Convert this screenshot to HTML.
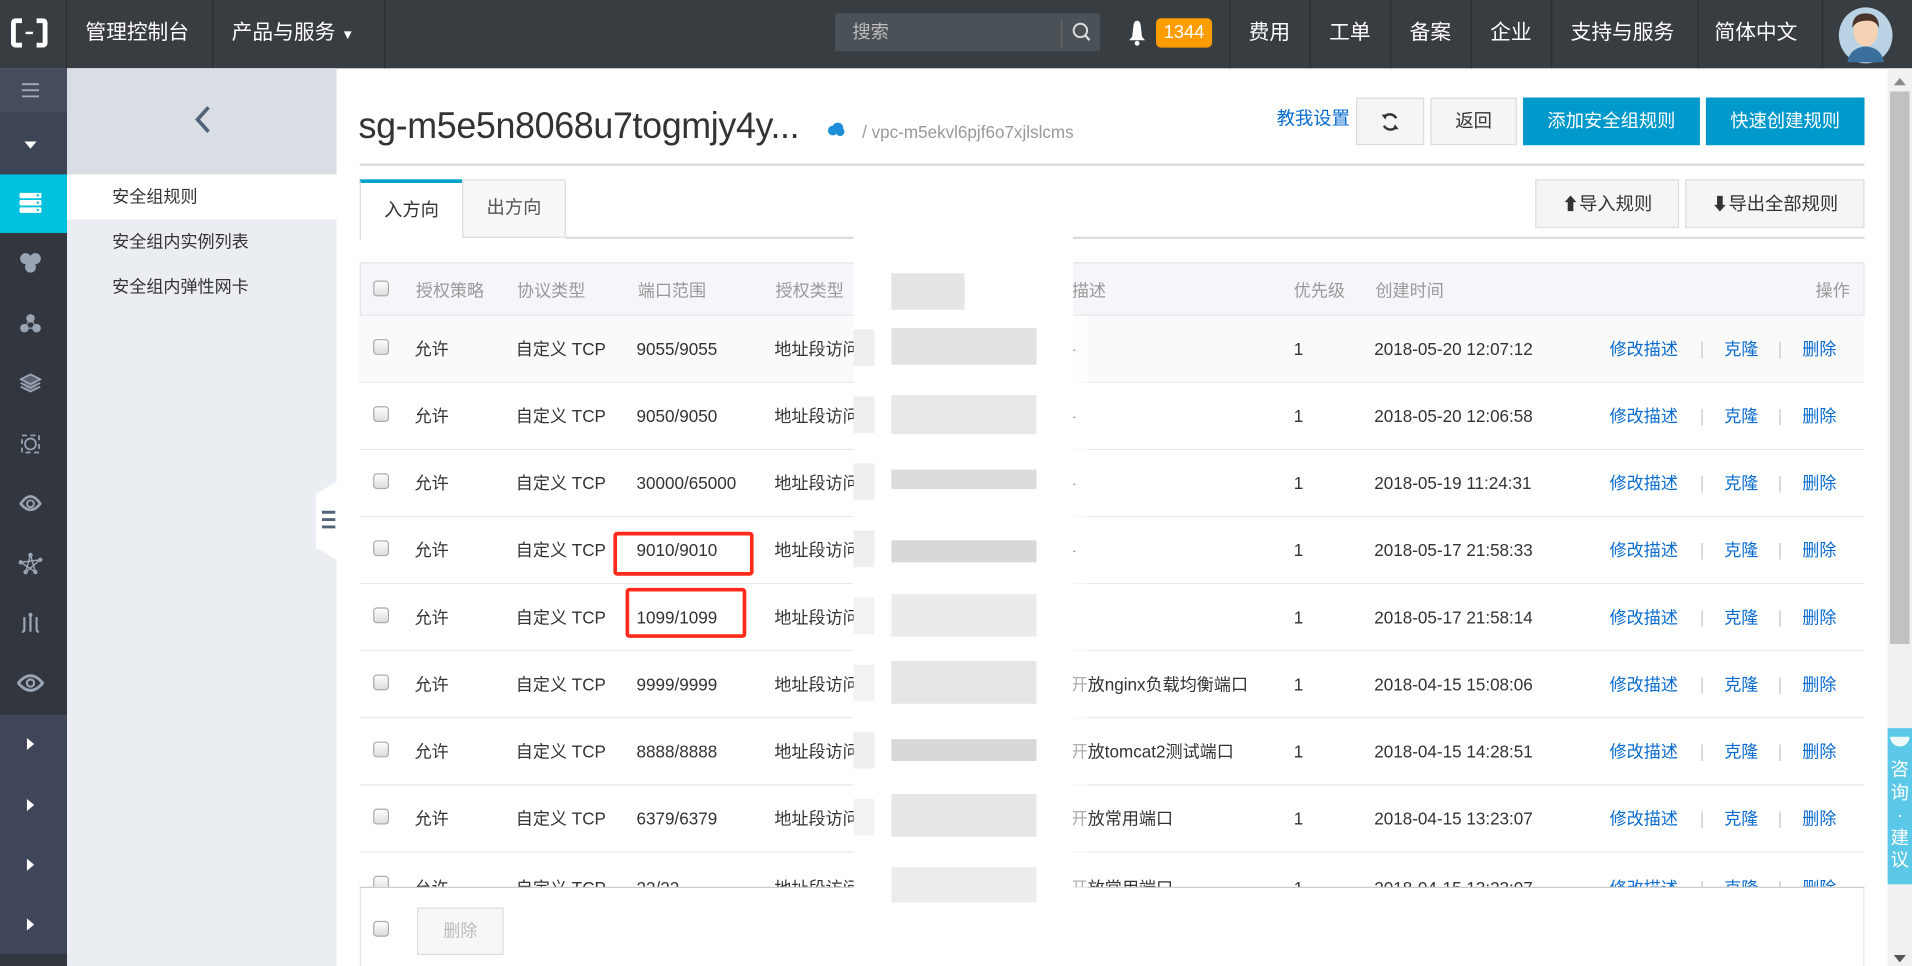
<!DOCTYPE html>
<html><head><meta charset="utf-8"><style>
*{box-sizing:border-box;margin:0;padding:0}
html,body{width:1912px;height:966px;overflow:hidden;background:#fff}
#w{position:absolute;left:0;top:0;width:1568px;height:792px;transform:scale(1.2194,1.2197);transform-origin:0 0;font-family:"Liberation Sans","Noto Sans CJK SC",sans-serif;color:#333;font-size:14px}
.a{position:absolute}
.top{left:0;top:0;width:1568px;height:56px;background:#373d41;color:#fff}
.top .t{position:absolute;top:0;line-height:54px;font-size:17px;color:#fff}
.sep{position:absolute;top:0;width:1px;height:56px;background:#2a2f33}
.si{position:absolute;left:0;width:55px}
.row{position:absolute;left:295px;width:1234px;height:55px;border-bottom:1px solid #e6e9ee;background:#fff}
.row span{position:absolute;top:0;line-height:54px;font-size:14px;color:#333;white-space:nowrap}
.cb{position:absolute;left:11px;top:19px;width:13px;height:13px;border:1px solid #aaa;border-radius:3px;background:linear-gradient(#fdfdfd,#ddd)}
.lk{color:#0a6ccf!important}
.bar{color:#ccc!important}
.btn{position:absolute;border:1px solid #ddd;background:#f5f5f5;text-align:center;font-size:14px;color:#333}
.blue{background:#0099cc;border-color:#0099cc;color:#fff}
.mz{position:absolute;background:#ddd}
</style></head><body><div id="w">
<!-- top bar -->
<div class="a top">
 <svg class="a" style="left:9px;top:15px" width="30" height="24" viewBox="0 0 30 24"><path d="M9 2H4Q2 2 2 4V20Q2 22 4 22H9M21 2H26Q28 2 28 4V20Q28 22 26 22H21" fill="none" stroke="#fff" stroke-width="4"/><rect x="12" y="11" width="6" height="2" fill="#fff"/></svg>
 <div class="sep" style="left:54px"></div>
 <div class="t" style="left:70px">管理控制台</div>
 <div class="sep" style="left:174px"></div>
 <div class="t" style="left:190px">产品与服务 <span style="font-size:11px">▼</span></div>
 <div class="sep" style="left:315px"></div>
 <div class="a" style="left:685px;top:11px;width:217px;height:31px;background:#4b5257"></div>
 <div class="a" style="left:699px;top:11px;line-height:31px;font-size:15px;color:#bbb">搜索</div>
 <div class="a" style="left:870px;top:15px;width:1px;height:24px;background:#666"></div>
 <svg class="a" style="left:879px;top:18px" width="16" height="17" viewBox="0 0 16 17"><circle cx="7" cy="7" r="5.5" fill="none" stroke="#ddd" stroke-width="1.6"/><path d="M11 11L14.5 15" stroke="#ddd" stroke-width="1.8"/></svg>
 <svg class="a" style="left:924px;top:16px" width="17" height="22" viewBox="0 0 17 22"><path d="M8.5 1Q11 1 11.5 5L12.5 14L15 17H2L4.5 14L5.5 5Q6 1 8.5 1Z" fill="#fff"/><circle cx="8.5" cy="19.5" r="2" fill="#fff"/></svg>
 <div class="a" style="left:948px;top:15px;width:46px;height:24px;background:#ff9c00;border-radius:4px;text-align:center;line-height:24px;font-size:15px;color:#fff">1344</div>
 <div class="sep" style="left:1008px"></div>
 <div class="t" style="left:1024px">费用</div><div class="sep" style="left:1074px"></div>
 <div class="t" style="left:1090px">工单</div><div class="sep" style="left:1140px"></div>
 <div class="t" style="left:1156px">备案</div><div class="sep" style="left:1206px"></div>
 <div class="t" style="left:1222px">企业</div><div class="sep" style="left:1272px"></div>
 <div class="t" style="left:1288px">支持与服务</div><div class="sep" style="left:1392px"></div>
 <div class="t" style="left:1406px">简体中文</div><div class="sep" style="left:1494px"></div>
 <svg class="a" style="left:1507px;top:5px" width="46" height="48" viewBox="0 0 46 48"><ellipse cx="23" cy="24" rx="22" ry="23" fill="#b9d3e4"/><path d="M8 46Q10 34 23 33Q36 34 38 46Z" fill="#3a6e9c"/><ellipse cx="23" cy="21" rx="10" ry="12" fill="#f6d2b4"/><path d="M12 18Q12 6 23 6Q34 6 34 18Q31 11 23 12Q15 12 12 18Z" fill="#4a3328"/></svg>
</div>
<!-- icon sidebar -->
<div class="si" style="top:56px;height:736px;background:#31363f"></div>
<div class="si" style="top:56px;height:36px;background:#454c5e"></div>
<svg class="a" style="left:18px;top:67px" width="14" height="14"><path d="M0 2H14M0 7H14M0 12H14" stroke="#aab" stroke-width="1.5"/></svg>
<div class="si" style="top:92px;height:51px;background:#3d4456"></div>
<svg class="a" style="left:20px;top:116px" width="10" height="6"><path d="M0 0H10L5 6Z" fill="#fff"/></svg>
<div class="si" style="top:143px;height:48px;background:#00c1de"></div>
<svg class="a" style="left:16px;top:158px" width="18" height="17"><rect x="0" y="0" width="18" height="4.5" fill="#fff" rx="1"/><rect x="0" y="6" width="18" height="4.5" fill="#fff" rx="1"/><rect x="0" y="12" width="18" height="4.5" fill="#fff" rx="1"/><circle cx="15" cy="2.2" r="1" fill="#00c1de"/><circle cx="15" cy="8.2" r="1" fill="#00c1de"/><circle cx="15" cy="14.2" r="1" fill="#00c1de"/></svg>
<svg class="a" style="left:16px;top:207px" width="18" height="18"><circle cx="5" cy="5" r="4.5" fill="#9aa5b4"/><circle cx="13" cy="5" r="4.5" fill="#9aa5b4"/><circle cx="9" cy="12" r="4.5" fill="#9aa5b4"/></svg>
<svg class="a" style="left:16px;top:257px" width="18" height="16"><path d="M9 4L4 12H14Z" stroke="#9aa5b4" fill="none"/><circle cx="9" cy="4" r="3.5" fill="#9aa5b4"/><circle cx="4" cy="12" r="3.5" fill="#9aa5b4"/><circle cx="14" cy="12" r="3.5" fill="#9aa5b4"/></svg>
<svg class="a" style="left:16px;top:306px" width="18" height="16"><path d="M1 5L9 1L17 5L9 9Z M1 8L9 12L17 8 M1 11L9 15L17 11" stroke="#9aa5b4" stroke-width="1.5" fill="#9aa5b4" fill-opacity=".4"/></svg>
<svg class="a" style="left:17px;top:356px" width="16" height="16"><rect x="1" y="1" width="14" height="14" fill="none" stroke="#9aa5b4" stroke-width="1.4" stroke-dasharray="4 3"/><circle cx="8" cy="8" r="4.5" fill="none" stroke="#9aa5b4" stroke-width="1.4"/></svg>
<svg class="a" style="left:15px;top:404px" width="20" height="16"><path d="M2 9Q10 -3 18 9Q10 19 2 9Z" fill="none" stroke="#9aa5b4" stroke-width="2.2"/><circle cx="10" cy="9" r="2.8" fill="none" stroke="#9aa5b4" stroke-width="1.6"/></svg>
<svg class="a" style="left:15px;top:453px" width="20" height="18"><path d="M10 2L6 16M10 2L14 16M2 8L18 6M6 16L18 6M14 16L2 8" stroke="#9aa5b4" stroke-width="1.2" fill="none"/><circle cx="10" cy="2" r="1.8" fill="#9aa5b4"/><circle cx="2" cy="8" r="1.8" fill="#9aa5b4"/><circle cx="18" cy="6" r="1.8" fill="#9aa5b4"/><circle cx="6" cy="16" r="1.8" fill="#9aa5b4"/><circle cx="14" cy="16" r="1.8" fill="#9aa5b4"/></svg>
<svg class="a" style="left:16px;top:502px" width="18" height="18"><path d="M4 4V14Q4 16 2 16M9 3V16M14 4V14Q14 16 16 16" stroke="#9aa5b4" stroke-width="1.8" fill="none"/><circle cx="9" cy="2" r="1.6" fill="#9aa5b4"/></svg>
<svg class="a" style="left:14px;top:552px" width="22" height="16"><path d="M1 8Q11 -4 21 8Q11 20 1 8Z" fill="none" stroke="#9aa5b4" stroke-width="2.4"/><circle cx="11" cy="8" r="3" fill="none" stroke="#9aa5b4" stroke-width="1.8"/></svg>
<div class="si" style="top:586px;height:196px;background:#3f4659"></div>
<div class="si" style="top:782px;height:10px;background:#31363f"></div>
<svg class="a" style="left:22px;top:605px" width="6" height="10"><path d="M0 0L6 5L0 10Z" fill="#fff"/></svg>
<svg class="a" style="left:22px;top:655px" width="6" height="10"><path d="M0 0L6 5L0 10Z" fill="#fff"/></svg>
<svg class="a" style="left:22px;top:704px" width="6" height="10"><path d="M0 0L6 5L0 10Z" fill="#fff"/></svg>
<svg class="a" style="left:22px;top:753px" width="6" height="10"><path d="M0 0L6 5L0 10Z" fill="#fff"/></svg>
<!-- secondary sidebar -->
<div class="a" style="left:55px;top:56px;width:221px;height:736px;background:#eaedf1"></div>
<div class="a" style="left:55px;top:56px;width:221px;height:87px;background:#d9dee4"></div>
<svg class="a" style="left:159px;top:86px" width="14" height="24"><path d="M12 2L3 12L12 22" stroke="#546478" stroke-width="3" fill="none"/></svg>
<div class="a" style="left:55px;top:143px;width:221px;height:37px;background:#fff"></div>
<div class="a" style="left:92px;top:143px;line-height:37px;font-size:14px">安全组规则</div>
<div class="a" style="left:92px;top:180px;line-height:37px;font-size:14px">安全组内实例列表</div>
<div class="a" style="left:92px;top:217px;line-height:37px;font-size:14px">安全组内弹性网卡</div>
<svg class="a" style="left:259px;top:395px" width="17" height="64"><path d="M17 0L0 10V54L17 64Z" fill="#fff"/><path d="M5 25H16M5 31H16M5 37H16" stroke="#546478" stroke-width="2.4"/></svg>
<!-- scrollbar -->
<div class="a" style="left:1548px;top:56px;width:20px;height:736px;background:#f1f1f1"></div>
<svg class="a" style="left:1553px;top:64px" width="10" height="6"><path d="M0 6H10L5 0Z" fill="#888"/></svg>
<div class="a" style="left:1550px;top:75px;width:16px;height:453px;background:#c1c1c1"></div>
<svg class="a" style="left:1553px;top:783px" width="10" height="6"><path d="M0 0H10L5 6Z" fill="#555"/></svg>
<div class="a" style="left:1548px;top:597px;width:20px;height:128px;background:#5bc8e8;color:#fff;font-size:15px;line-height:18.5px;text-align:center;padding-top:26px">咨<br>询<br>·<br>建<br>议</div>
<div class="a" style="left:1550px;top:604px;width:16px;height:8px;background:#fff;border-radius:0 0 8px 8px;opacity:.9"></div>
<!-- header -->
<div class="a" style="left:294px;top:83px;font-size:30px;line-height:42px;color:#333;letter-spacing:-.3px;transform:scaleX(.98);transform-origin:0 0">sg-m5e5n8068u7togmjy4y...</div>
<svg class="a" style="left:678px;top:100px" width="15" height="12"><circle cx="5" cy="7" r="4" fill="#1e8fd6"/><circle cx="9" cy="5" r="4.5" fill="#1e8fd6"/><circle cx="11" cy="8" r="3.5" fill="#1e8fd6"/></svg>
<div class="a" style="left:707px;top:98px;font-size:14px;line-height:20px;color:#999">/ vpc-m5ekvl6pjf6o7xjlslcms</div>
<div class="a" style="left:1047px;top:88px;font-size:15px;line-height:20px;color:#0a6ccf">教我设置</div>
<div class="btn" style="left:1112px;top:80px;width:56px;height:39px;line-height:37px">
<svg width="16" height="18" style="margin-top:10px" viewBox="0 0 16 18"><path d="M13 6A6 6 0 0 0 3 5M3 12A6 6 0 0 0 13 13" stroke="#333" stroke-width="2" fill="none"/><path d="M1 3L4 7L6 3Z M15 15L12 11L10 15Z" fill="#333"/></svg></div>
<div class="btn" style="left:1173px;top:80px;width:71px;height:39px;line-height:37px;font-size:15px">返回</div>
<div class="btn blue" style="left:1249px;top:80px;width:145px;height:39px;line-height:37px;font-size:15px">添加安全组规则</div>
<div class="btn blue" style="left:1399px;top:80px;width:130px;height:39px;line-height:37px;font-size:15px">快速创建规则</div>
<div class="a" style="left:295px;top:134px;width:1234px;height:2px;background:#ddd"></div>
<!-- tabs -->
<div class="a" style="left:295px;top:147px;width:84px;height:50px;background:#fff;border-left:1px solid #ddd;border-top:3px solid #00a2ca;text-align:center;line-height:46px;font-size:15px">入方向</div>
<div class="a" style="left:379px;top:147px;width:85px;height:48px;background:#f8f8f8;border:1px solid #ddd;text-align:center;line-height:46px;font-size:15px;color:#555">出方向</div>
<div class="a" style="left:464px;top:194px;width:1065px;height:2px;background:#ddd"></div>
<div class="btn" style="left:1259px;top:147px;width:118px;height:40px;line-height:38px;font-size:15px"><span style="font-size:14px">⬆</span>导入规则</div>
<div class="btn" style="left:1382px;top:147px;width:147px;height:40px;line-height:38px;font-size:15px"><span style="font-size:14px">⬇</span>导出全部规则</div>
<!-- table -->
<div class="a" style="left:295px;top:215px;width:1234px;height:577px;border:1px solid #e3e6eb;border-bottom:0"></div>
<div class="row" style="top:215px;height:44px;background:#f5f6fa;border:1px solid #e3e6eb">
<div class="cb" style="top:14px;left:10px"></div>
<span style="left:45px;line-height:44px;color:#999">授权策略</span><span style="left:128px;line-height:44px;color:#999">协议类型</span><span style="left:227px;line-height:44px;color:#999">端口范围</span><span style="left:340px;line-height:44px;color:#999">授权类型</span><span style="left:583px;line-height:44px;color:#999">描述</span><span style="left:765px;line-height:44px;color:#999">优先级</span><span style="left:832px;line-height:44px;color:#999">创建时间</span><span style="left:1193px;line-height:44px;color:#999">操作</span></div>

<div class="row" style="top:259px;background:#fafafa"><div class="cb"></div><span style="left:45px">允许</span><span style="left:128px">自定义 TCP</span><span style="left:227px">9055/9055</span><span style="left:340px">地址段访问</span><span style="left:583px">-</span><span style="left:766px">1</span><span style="left:832px">2018-05-20 12:07:12</span><span class="lk" style="left:1025px">修改描述</span><span class="bar" style="left:1099px">|</span><span class="lk" style="left:1119px">克隆</span><span class="bar" style="left:1163px">|</span><span class="lk" style="left:1183px">删除</span></div>
<div class="row" style="top:314px"><div class="cb"></div><span style="left:45px">允许</span><span style="left:128px">自定义 TCP</span><span style="left:227px">9050/9050</span><span style="left:340px">地址段访问</span><span style="left:583px">-</span><span style="left:766px">1</span><span style="left:832px">2018-05-20 12:06:58</span><span class="lk" style="left:1025px">修改描述</span><span class="bar" style="left:1099px">|</span><span class="lk" style="left:1119px">克隆</span><span class="bar" style="left:1163px">|</span><span class="lk" style="left:1183px">删除</span></div>
<div class="row" style="top:369px"><div class="cb"></div><span style="left:45px">允许</span><span style="left:128px">自定义 TCP</span><span style="left:227px">30000/65000</span><span style="left:340px">地址段访问</span><span style="left:583px">-</span><span style="left:766px">1</span><span style="left:832px">2018-05-19 11:24:31</span><span class="lk" style="left:1025px">修改描述</span><span class="bar" style="left:1099px">|</span><span class="lk" style="left:1119px">克隆</span><span class="bar" style="left:1163px">|</span><span class="lk" style="left:1183px">删除</span></div>
<div class="row" style="top:424px"><div class="cb"></div><span style="left:45px">允许</span><span style="left:128px">自定义 TCP</span><span style="left:227px">9010/9010</span><span style="left:340px">地址段访问</span><span style="left:583px">-</span><span style="left:766px">1</span><span style="left:832px">2018-05-17 21:58:33</span><span class="lk" style="left:1025px">修改描述</span><span class="bar" style="left:1099px">|</span><span class="lk" style="left:1119px">克隆</span><span class="bar" style="left:1163px">|</span><span class="lk" style="left:1183px">删除</span></div>
<div class="row" style="top:479px"><div class="cb"></div><span style="left:45px">允许</span><span style="left:128px">自定义 TCP</span><span style="left:227px">1099/1099</span><span style="left:340px">地址段访问</span><span style="left:766px">1</span><span style="left:832px">2018-05-17 21:58:14</span><span class="lk" style="left:1025px">修改描述</span><span class="bar" style="left:1099px">|</span><span class="lk" style="left:1119px">克隆</span><span class="bar" style="left:1163px">|</span><span class="lk" style="left:1183px">删除</span></div>
<div class="row" style="top:534px"><div class="cb"></div><span style="left:45px">允许</span><span style="left:128px">自定义 TCP</span><span style="left:227px">9999/9999</span><span style="left:340px">地址段访问</span><span style="left:583px">开放nginx负载均衡端口</span><span style="left:766px">1</span><span style="left:832px">2018-04-15 15:08:06</span><span class="lk" style="left:1025px">修改描述</span><span class="bar" style="left:1099px">|</span><span class="lk" style="left:1119px">克隆</span><span class="bar" style="left:1163px">|</span><span class="lk" style="left:1183px">删除</span></div>
<div class="row" style="top:589px"><div class="cb"></div><span style="left:45px">允许</span><span style="left:128px">自定义 TCP</span><span style="left:227px">8888/8888</span><span style="left:340px">地址段访问</span><span style="left:583px">开放tomcat2测试端口</span><span style="left:766px">1</span><span style="left:832px">2018-04-15 14:28:51</span><span class="lk" style="left:1025px">修改描述</span><span class="bar" style="left:1099px">|</span><span class="lk" style="left:1119px">克隆</span><span class="bar" style="left:1163px">|</span><span class="lk" style="left:1183px">删除</span></div>
<div class="row" style="top:644px"><div class="cb"></div><span style="left:45px">允许</span><span style="left:128px">自定义 TCP</span><span style="left:227px">6379/6379</span><span style="left:340px">地址段访问</span><span style="left:583px">开放常用端口</span><span style="left:766px">1</span><span style="left:832px">2018-04-15 13:23:07</span><span class="lk" style="left:1025px">修改描述</span><span class="bar" style="left:1099px">|</span><span class="lk" style="left:1119px">克隆</span><span class="bar" style="left:1163px">|</span><span class="lk" style="left:1183px">删除</span></div>
<div class="row" style="top:699px;height:29px;overflow:hidden;border-bottom:1px solid #ccc"><div class="cb"></div><span style="left:45px;top:2px">允许</span><span style="left:128px;top:2px">自定义 TCP</span><span style="left:227px;top:2px">22/22</span><span style="left:340px;top:2px">地址段访问</span><span style="left:583px;top:2px">开放常用端口</span><span style="left:766px;top:2px">1</span><span style="left:832px;top:2px">2018-04-15 13:23:07</span><span class="lk" style="left:1025px;top:2px">修改描述</span><span class="bar" style="left:1099px;top:2px">|</span><span class="lk" style="left:1119px;top:2px">克隆</span><span class="bar" style="left:1163px;top:2px">|</span><span class="lk" style="left:1183px;top:2px">删除</span></div>
<!-- blur overlay -->
<div class="a" style="left:700px;top:180px;width:180px;height:560px;background:#fff"></div>
<div class="a" style="left:880px;top:259px;width:12px;height:470px;background:rgba(255,255,255,.6)"></div>
<div class="mz" style="left:731px;top:224px;width:60px;height:30px;background:#e4e4e4"></div>
<div class="mz" style="left:731px;top:269px;width:119px;height:30px;background:#e2e2e2"></div>
<div class="mz" style="left:731px;top:324px;width:119px;height:32px;background:#e8e8e8"></div>
<div class="mz" style="left:731px;top:385px;width:119px;height:16px;background:#dcdcdc"></div>
<div class="mz" style="left:731px;top:443px;width:119px;height:18px;background:#d8d8d8"></div>
<div class="mz" style="left:731px;top:487px;width:119px;height:35px;background:#ebebeb"></div>
<div class="mz" style="left:731px;top:542px;width:119px;height:35px;background:#e6e6e6"></div>
<div class="mz" style="left:731px;top:606px;width:119px;height:18px;background:#d8d8d8"></div>
<div class="mz" style="left:731px;top:651px;width:119px;height:35px;background:#e6e6e6"></div>
<div class="mz" style="left:731px;top:711px;width:119px;height:29px;background:#ececec"></div>
<div class="mz" style="left:700px;top:270px;width:17px;height:30px;background:#eee"></div>
<div class="mz" style="left:700px;top:325px;width:17px;height:30px;background:#eee"></div>
<div class="mz" style="left:700px;top:380px;width:17px;height:30px;background:#eee"></div>
<div class="mz" style="left:700px;top:435px;width:17px;height:30px;background:#eee"></div>
<div class="mz" style="left:700px;top:490px;width:17px;height:30px;background:#f2f2f2"></div>
<div class="mz" style="left:700px;top:545px;width:17px;height:30px;background:#f2f2f2"></div>
<div class="mz" style="left:700px;top:600px;width:17px;height:30px;background:#eee"></div>
<div class="mz" style="left:700px;top:655px;width:17px;height:30px;background:#f2f2f2"></div>
<!-- red boxes -->
<div class="a" style="left:503px;top:436px;width:115px;height:36px;border:3px solid #ff2a1a;border-radius:3px"></div>
<div class="a" style="left:513px;top:482px;width:99px;height:41px;border:3px solid #ff2a1a;border-radius:3px"></div>
<!-- footer -->
<div class="cb" style="left:306px;top:755px"></div>
<div class="btn" style="left:342px;top:744px;width:71px;height:39px;line-height:37px;color:#bbb;background:#f7f7f7">删除</div>
</div></body></html>
